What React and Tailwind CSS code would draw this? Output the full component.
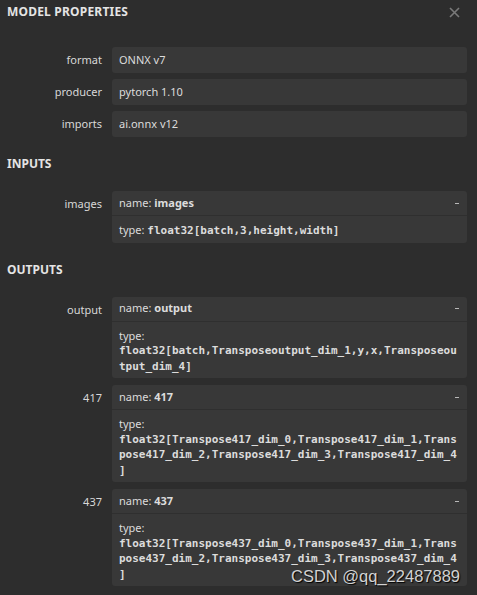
import React from "react";

const SANS = "font-['Noto_Sans','Open_Sans',sans-serif]";
const MONO = "font-['DejaVu_Sans_Mono','Liberation_Mono',monospace]";

function Attr({ label, value }) {
  return (
    <div className="flex items-start">
      <div className="w-[102px] shrink-0 text-right pt-[5px] leading-[16px] text-[#d8d8d8]">{label}</div>
      <div className="ml-[10px] w-[355px] h-[26px] rounded-[3px] bg-[#383838] px-[7px] flex items-center text-[#dcdcdc]">
        {value}
      </div>
    </div>
  );
}

function Arg({ label, name, type }) {
  return (
    <div className="flex items-start">
      <div className="w-[102px] shrink-0 text-right pt-[5px] leading-[16px] text-[#d8d8d8]">{label}</div>
      <div className="ml-[10px] w-[355px] rounded-[3px] bg-[#383838] text-[#dcdcdc] relative">
        <div className="h-[25px] flex items-center justify-between pl-[7px] pr-[8px] border-b border-[#2f2f2f]">
          <div>
            name: <span className="font-bold">{name}</span>
          </div>
          <div className="w-[4px] h-[1px] bg-[#b8b8b8]" />
        </div>
        <div className="pt-[6px] pb-[4px] pl-[7px] pr-[8px] leading-[15.5px]">
          {type.length > 30 ? (
            <>
              <div>type:</div>
              <div className={`${MONO} text-[11px] font-semibold break-all [line-break:anywhere]`}>{type}</div>
            </>
          ) : (
            <div>
              type: <span className={`${MONO} text-[11px] font-semibold`}>{type}</span>
            </div>
          )}
        </div>
      </div>
    </div>
  );
}

function Heading({ children }) {
  return (
    <div className="h-[54px] flex items-center pl-[7px] font-bold text-[#e4e4e4] text-[12px]">{children}</div>
  );
}

export default function App() {
  return (
    <div className={`w-[477px] h-[595px] bg-[#2d2d2d] relative overflow-hidden text-[11px] ${SANS}`}>
      <div className="h-[24px] flex items-center justify-between pl-[7px] pr-[17px]">
        <div className="font-bold text-[12px] tracking-[0.2px] text-[#e4e4e4]">MODEL PROPERTIES</div>
        <svg width="11" height="11" viewBox="0 0 11 11">
          <path d="M1 1 L10 10 M10 1 L1 10" stroke="#7a7a7a" strokeWidth="1.6" />
        </svg>
      </div>
      <div className="mt-[23px] flex flex-col gap-[6px]">
        <Attr label="format" value="ONNX v7" />
        <Attr label="producer" value="pytorch 1.10" />
        <Attr label="imports" value="ai.onnx v12" />
      </div>
      <Heading>INPUTS</Heading>
      <Arg label="images" name="images" type="float32[batch,3,height,width]" />
      <Heading>OUTPUTS</Heading>
      <div className="flex flex-col gap-[7px]">
        <Arg
          label="output"
          name="output"
          type="float32[batch,Transposeoutput_dim_1,y,x,Transposeoutput_dim_4]"
        />
        <Arg
          label="417"
          name="417"
          type="float32[Transpose417_dim_0,Transpose417_dim_1,Transpose417_dim_2,Transpose417_dim_3,Transpose417_dim_4]"
        />
        <Arg
          label="437"
          name="437"
          type="float32[Transpose437_dim_0,Transpose437_dim_1,Transpose437_dim_2,Transpose437_dim_3,Transpose437_dim_4]"
        />
      </div>
      <div className="absolute left-[291px] top-[566px] font-['Liberation_Sans',Arial,sans-serif] text-[16.5px] leading-[20px] text-[#d2d2d2] [text-shadow:1px_1px_1px_#000]">
        CSDN @qq_22487889
      </div>
    </div>
  );
}
